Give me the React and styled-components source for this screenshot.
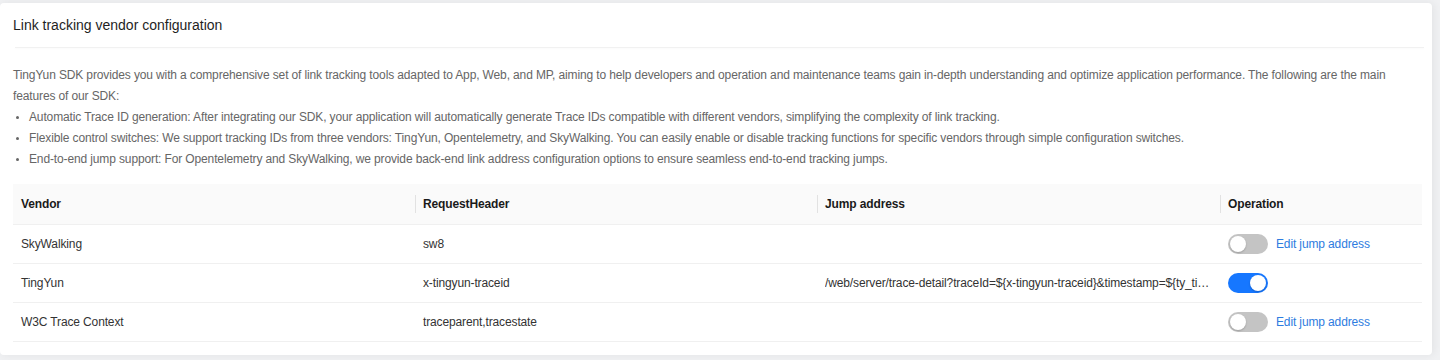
import styled, { createGlobalStyle } from "styled-components"

const GlobalStyle = createGlobalStyle`
  body {
    margin: 0;
    background: #f0f1f3;
    font-family: "Liberation Sans", Arial, sans-serif;
  }
`

const vendors = [
  { name: "SkyWalking", header: "sw8", jump: "", on: false, editable: true },
  {
    name: "TingYun",
    header: "x-tingyun-traceid",
    jump: "/web/server/trace-detail?traceId=${x-tingyun-traceid}&timestamp=${ty_timestamp}",
    on: true,
    editable: false,
  },
  { name: "W3C Trace Context", header: "traceparent,tracestate", jump: "", on: false, editable: true },
]

const features = [
  "Automatic Trace ID generation: After integrating our SDK, your application will automatically generate Trace IDs compatible with different vendors, simplifying the complexity of link tracking.",
  "Flexible control switches: We support tracking IDs from three vendors: TingYun, Opentelemetry, and SkyWalking. You can easily enable or disable tracking functions for specific vendors through simple configuration switches.",
  "End-to-end jump support: For Opentelemetry and SkyWalking, we provide back-end link address configuration options to ensure seamless end-to-end tracking jumps.",
]

const App = () => {
  return (
    <Page>
      <GlobalStyle />
      <Card>
        <CardHeader>Link tracking vendor configuration</CardHeader>
        <Divider />
        <CardBody>
          <Intro>
            TingYun SDK provides you with a comprehensive set of link tracking tools adapted to App, Web, and MP, aiming to help developers and operation and maintenance teams gain in-depth understanding and optimize application performance. The following are the main features of our SDK:
          </Intro>
          <FeatureList>
            {features.map((f) => (
              <li key={f}>{f}</li>
            ))}
          </FeatureList>
          <Table>
            <colgroup>
              <col style={{ width: 402 }} />
              <col style={{ width: 402 }} />
              <col style={{ width: 403 }} />
              <col />
            </colgroup>
            <thead>
              <tr>
                <Th>Vendor</Th>
                <Th $sep>RequestHeader</Th>
                <Th $sep>Jump address</Th>
                <Th $sep>Operation</Th>
              </tr>
            </thead>
            <tbody>
              {vendors.map((v) => (
                <tr key={v.name}>
                  <Td>{v.name}</Td>
                  <Td>{v.header}</Td>
                  <Td>
                    <Ellipsis>{v.jump}</Ellipsis>
                  </Td>
                  <Td>
                    <Operation>
                      <Switch $on={v.on} />
                      {v.editable && <EditLink>Edit jump address</EditLink>}
                    </Operation>
                  </Td>
                </tr>
              ))}
            </tbody>
          </Table>
        </CardBody>
      </Card>
    </Page>
  )
}

export default App

const Page = styled.div`
  width: 1440px;
  height: 360px;
  box-sizing: border-box;
  padding: 3px 8px 5px 0;
`
const Card = styled.div`
  background: #fff;
  border-radius: 4px;
  box-shadow: 2px 0 8px rgba(0, 0, 0, 0.06);
  height: 352px;
  box-sizing: border-box;
`
const CardHeader = styled.div`
  height: 44px;
  display: flex;
  align-items: center;
  padding: 0 13px;
  font-size: 14px;
  color: #1f1f1f;
`
const Divider = styled.div`
  height: 1px;
  margin: 0 8px 0 15px;
  background: #f1f1f1;
  box-shadow: 0 1px 2px rgba(0, 0, 0, 0.03);
`
const CardBody = styled.div`
  padding: 17px 10px 14px 13px;
  font-size: 12px;
  letter-spacing: -0.13px;
`
const Intro = styled.p`
  margin: 0;
  line-height: 21px;
  color: #666;
`
const FeatureList = styled.ul`
  margin: 0;
  padding-left: 16px;
  line-height: 21px;
  color: #666;
  li::marker {
    font-size: 10px;
  }
`
const Table = styled.table`
  width: 100%;
  margin-top: 14px;
  border-collapse: collapse;
  table-layout: fixed;
`
const Th = styled.th`
  position: relative;
  box-sizing: border-box;
  height: 40px;
  padding: 0 8px;
  text-align: left;
  font-weight: bold;
  color: #1a1a1a;
  background: #fafafa;
  border-bottom: 1px solid #f0f0f0;
  &::before {
    content: "";
    display: ${(p) => (p.$sep ? "block" : "none")};
    position: absolute;
    left: 0;
    top: 50%;
    width: 1px;
    height: 18px;
    transform: translateY(-50%);
    background: #e2e2e2;
  }
`
const Td = styled.td`
  box-sizing: border-box;
  height: 39px;
  padding: 0 8px;
  color: #333;
  border-bottom: 1px solid #f0f0f0;
`
const Ellipsis = styled.div`
  white-space: nowrap;
  overflow: hidden;
  text-overflow: ellipsis;
`
const Operation = styled.div`
  display: flex;
  align-items: center;
  gap: 8px;
`
const Switch = styled.span`
  position: relative;
  width: 40px;
  height: 20px;
  border-radius: 10px;
  background: ${(p) => (p.$on ? "#1677ff" : "#c4c4c4")};
  flex-shrink: 0;
  &::after {
    content: "";
    position: absolute;
    top: 2px;
    left: ${(p) => (p.$on ? "22px" : "2px")};
    width: 16px;
    height: 16px;
    border-radius: 50%;
    background: #fff;
    box-shadow: 0 1px 2px rgba(0, 0, 0, 0.2);
  }
`
const EditLink = styled.a`
  color: #2e7ce0;
  cursor: pointer;
  white-space: nowrap;
`
